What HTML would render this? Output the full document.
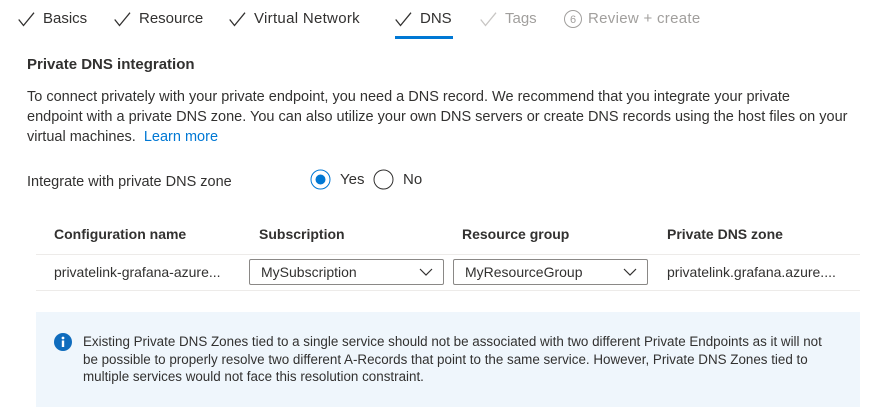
<!DOCTYPE html>
<html><head><meta charset="utf-8"><style>
*{margin:0;padding:0;box-sizing:border-box}
body{width:885px;height:407px;background:#fff;font-family:"Liberation Sans",sans-serif;color:#323130;position:relative;overflow:hidden}
.a{position:absolute;white-space:nowrap}
.tab{font-size:15px;top:10px}
.ck{position:absolute;top:12px}
.p{font-size:14.5px;left:27px}
.h{font-size:14px;font-weight:bold}
.line{position:absolute;left:36px;width:824px;height:1px;background:#edebe9}
.dd{position:absolute;top:259px;height:26px;border:1px solid #8a8886;border-radius:2px;font-size:14px;padding:4px 0 0 11px}
.dd svg{position:absolute;right:10px;top:8px}
.info{position:absolute;left:36px;top:312px;width:824px;height:95px;background:#eff6fc}
.it{font-size:13.4px;left:83px;line-height:17.5px;top:333px;color:#323130}
</style></head><body>
<svg class="ck" style="left:18px" width="17" height="15" viewBox="0 0 17 15"><path d="M0.7 7.5 L5.5 13.5 L16 0.7" fill="none" stroke="#323130" stroke-width="1.3"/></svg>
<div class="a tab" style="left:43px">Basics</div>
<svg class="ck" style="left:114px" width="17" height="15" viewBox="0 0 17 15"><path d="M0.7 7.5 L5.5 13.5 L16 0.7" fill="none" stroke="#323130" stroke-width="1.3"/></svg>
<div class="a tab" style="left:139px">Resource</div>
<svg class="ck" style="left:229px" width="17" height="15" viewBox="0 0 17 15"><path d="M0.7 7.5 L5.5 13.5 L16 0.7" fill="none" stroke="#323130" stroke-width="1.3"/></svg>
<div class="a tab" style="left:254px;letter-spacing:0.3px">Virtual Network</div>
<svg class="ck" style="left:395px" width="17" height="15" viewBox="0 0 17 15"><path d="M0.7 7.5 L5.5 13.5 L16 0.7" fill="none" stroke="#323130" stroke-width="1.3"/></svg>
<div class="a tab" style="left:420px">DNS</div>
<div style="position:absolute;left:395px;top:36px;width:58px;height:3px;background:#0078d4"></div>
<svg class="ck" style="left:480px" width="17" height="15" viewBox="0 0 17 15"><path d="M0.7 7.5 L5.5 13.5 L16 0.7" fill="none" stroke="#c8c6c4" stroke-width="1.3"/></svg>
<div class="a tab" style="left:505px;color:#a19f9d">Tags</div>
<svg style="position:absolute;left:563px;top:9px" width="20" height="20"><circle cx="10" cy="10" r="8.5" fill="none" stroke="#a19f9d" stroke-width="1"/><text x="10" y="14" font-size="11" text-anchor="middle" fill="#a19f9d" font-family="Liberation Sans">6</text></svg>
<div class="a tab" style="left:588px;color:#a19f9d;letter-spacing:0.3px">Review + create</div>

<div class="a h" style="left:27px;top:56px;font-size:15px">Private DNS integration</div>
<div class="a p" style="top:87px;line-height:20px">To connect privately with your private endpoint, you need a DNS record. We recommend that you integrate your private<br>endpoint with a private DNS zone. You can also utilize your own DNS servers or create DNS records using the host files on your<br>virtual machines.&nbsp;&nbsp;<span style="color:#0078d4">Learn more</span></div>
<div class="a p" style="top:174px">Integrate with private DNS zone</div>
<svg style="position:absolute;left:310px;top:169px" width="21" height="21"><circle cx="10.5" cy="10.5" r="9.5" fill="none" stroke="#0078d4" stroke-width="1"/><circle cx="10.5" cy="10.5" r="5" fill="#0078d4"/></svg>
<div class="a" style="left:340px;top:171px;font-size:15px">Yes</div>
<svg style="position:absolute;left:373px;top:169px" width="21" height="21"><circle cx="10.5" cy="10.5" r="9.5" fill="none" stroke="#323130" stroke-width="1"/></svg>
<div class="a" style="left:403px;top:171px;font-size:15px">No</div>

<div class="a h" style="left:54px;top:226px">Configuration name</div>
<div class="a h" style="left:259px;top:226px">Subscription</div>
<div class="a h" style="left:462px;top:226px">Resource group</div>
<div class="a h" style="left:667px;top:226px">Private DNS zone</div>
<div class="line" style="top:254px"></div>
<div class="a" style="left:54px;top:264px;font-size:14px">privatelink-grafana-azure...</div>
<div class="dd" style="left:249px;width:195px">MySubscription<svg width="14" height="9"><path d="M1 1 L7 7 L13 1" fill="none" stroke="#323130" stroke-width="1.2"/></svg></div>
<div class="dd" style="left:453px;width:195px">MyResourceGroup<svg width="14" height="9"><path d="M1 1 L7 7 L13 1" fill="none" stroke="#323130" stroke-width="1.2"/></svg></div>
<div class="a" style="left:667px;top:264px;font-size:14px">privatelink.grafana.azure....</div>
<div class="line" style="top:290px"></div>

<div class="info"></div>
<svg style="position:absolute;left:54px;top:333px" width="18" height="18"><circle cx="9" cy="9" r="9" fill="#0f6cbd"/><rect x="7.8" y="7.5" width="2.4" height="6.5" fill="#fff"/><circle cx="9" cy="5" r="1.4" fill="#fff"/></svg>
<div class="a it">Existing Private DNS Zones tied to a single service should not be associated with two different Private Endpoints as it will not<br>be possible to properly resolve two different A-Records that point to the same service. However, Private DNS Zones tied to<br>multiple services would not face this resolution constraint.</div>
</body></html>
